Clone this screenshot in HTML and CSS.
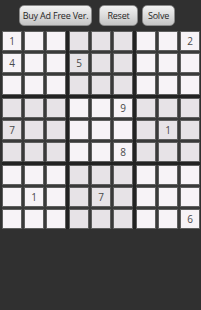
FILE: index.html
```html
<!DOCTYPE html>
<html>
<head>
<meta charset="utf-8">
<link rel="stylesheet" href="styles.css">
</head>
<body>
<div class="bar">
  <button class="btn btn-buy">Buy Ad Free Ver.</button>
  <button class="btn btn-reset">Reset</button>
  <button class="btn btn-solve">Solve</button>
</div>
<div class="board">
  <div class="block">
    <div class="cell">1</div><div class="cell"></div><div class="cell"></div>
    <div class="cell">4</div><div class="cell"></div><div class="cell"></div>
    <div class="cell"></div><div class="cell"></div><div class="cell"></div>
  </div>
  <div class="block shade">
    <div class="cell"></div><div class="cell"></div><div class="cell"></div>
    <div class="cell">5</div><div class="cell"></div><div class="cell"></div>
    <div class="cell"></div><div class="cell"></div><div class="cell"></div>
  </div>
  <div class="block">
    <div class="cell"></div><div class="cell"></div><div class="cell">2</div>
    <div class="cell"></div><div class="cell"></div><div class="cell"></div>
    <div class="cell"></div><div class="cell"></div><div class="cell"></div>
  </div>
  <div class="block shade">
    <div class="cell"></div><div class="cell"></div><div class="cell"></div>
    <div class="cell">7</div><div class="cell"></div><div class="cell"></div>
    <div class="cell"></div><div class="cell"></div><div class="cell"></div>
  </div>
  <div class="block">
    <div class="cell"></div><div class="cell"></div><div class="cell">9</div>
    <div class="cell"></div><div class="cell"></div><div class="cell"></div>
    <div class="cell"></div><div class="cell"></div><div class="cell">8</div>
  </div>
  <div class="block shade">
    <div class="cell"></div><div class="cell"></div><div class="cell"></div>
    <div class="cell"></div><div class="cell">1</div><div class="cell"></div>
    <div class="cell"></div><div class="cell"></div><div class="cell"></div>
  </div>
  <div class="block">
    <div class="cell"></div><div class="cell"></div><div class="cell"></div>
    <div class="cell"></div><div class="cell">1</div><div class="cell"></div>
    <div class="cell"></div><div class="cell"></div><div class="cell"></div>
  </div>
  <div class="block shade">
    <div class="cell"></div><div class="cell"></div><div class="cell"></div>
    <div class="cell"></div><div class="cell">7</div><div class="cell"></div>
    <div class="cell"></div><div class="cell"></div><div class="cell"></div>
  </div>
  <div class="block">
    <div class="cell"></div><div class="cell"></div><div class="cell"></div>
    <div class="cell"></div><div class="cell"></div><div class="cell"></div>
    <div class="cell"></div><div class="cell"></div><div class="cell">6</div>
  </div>
</div>
</body>
</html>
```

FILE: styles.css
```css
html, body {
  margin: 0;
  padding: 0;
  background: #303030;
  width: 201px;
  height: 310px;
  overflow: hidden;
}

.bar {
  display: flex;
  padding: 5px 0 0 19px;
  height: 21px;
  margin-bottom: 5px;
}

.btn {
  box-sizing: border-box;
  height: 21px;
  padding: 0;
  border: 1px solid #8a8a8a;
  border-radius: 5px;
  background: linear-gradient(#f2f2f2, #dcdcdc 50%, #c4c4c4);
  color: #262626;
  font-family: "Open Sans", "DejaVu Sans", sans-serif;
  font-size: 9px;
  line-height: 19px;
  text-align: center;
  letter-spacing: -0.2px;
}

.btn-buy { width: 73px; }
.btn-reset { width: 39px; margin-left: 7px; }
.btn-solve { width: 33px; margin-left: 4px; }

.board {
  margin-left: 2px;
  display: grid;
  grid-template-columns: repeat(3, 64px);
  grid-template-rows: repeat(3, 64px);
  gap: 3px;
  width: 198px;
  background: #222;
}

.block {
  display: grid;
  grid-template-columns: repeat(3, 20px);
  grid-template-rows: repeat(3, 20px);
  gap: 2px;
  background: #3a3a3a;
}

.cell {
  box-sizing: border-box;
  border: 1px solid #5e5e5e;
  background: #f7f3f7;
  color: #4a4a4a;
  font-family: "Open Sans", "DejaVu Sans", sans-serif;
  font-size: 10px;
  line-height: 18px;
  text-align: center;
}

.shade .cell {
  background: #e7e3e7;
}
```
